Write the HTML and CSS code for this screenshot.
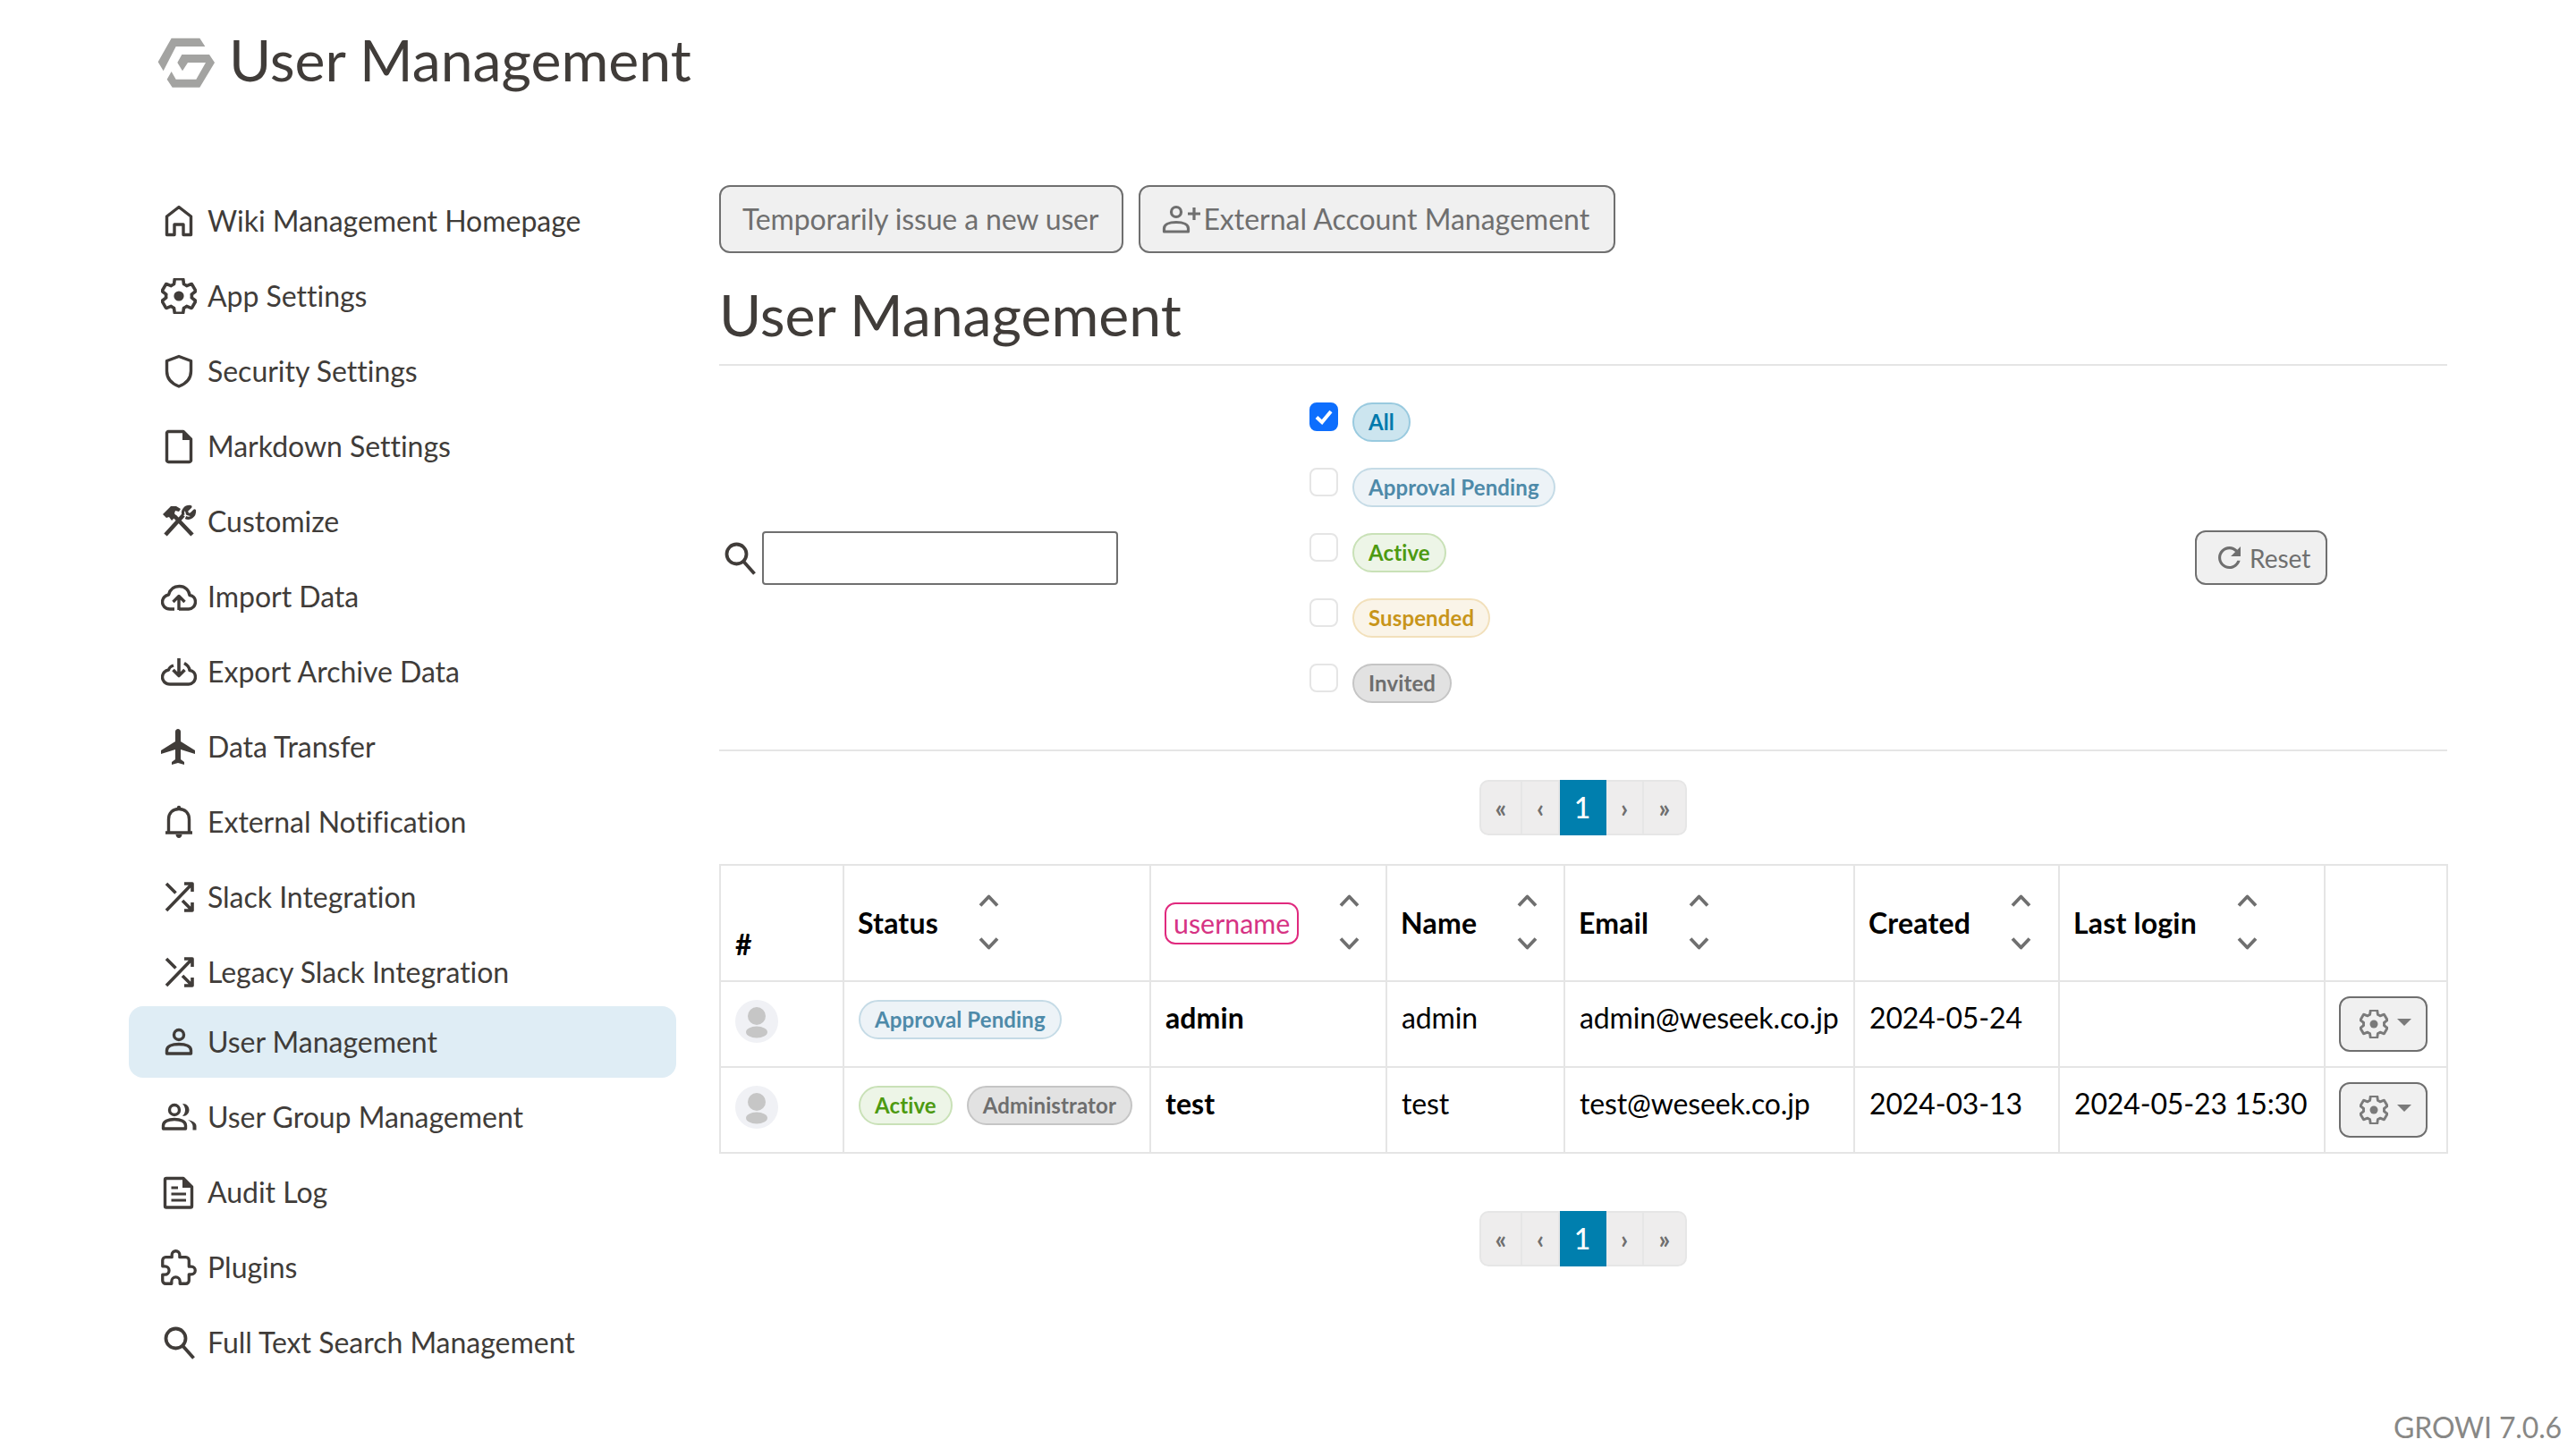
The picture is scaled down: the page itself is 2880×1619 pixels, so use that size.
FILE: index.html
```html
<!DOCTYPE html>
<html lang="en">
<head>
<meta charset="utf-8">
<title>User Management</title>
<link rel="stylesheet" href="styles.css">
</head>
<body>
<svg class="defs" width="0" height="0" aria-hidden="true">
  <symbol id="i-gear" viewBox="2 2 20 20"><path class="ln" d="M19.14 12.94c.04-.3.06-.61.06-.94 0-.32-.02-.64-.07-.94l2.03-1.58c.18-.14.23-.41.12-.61l-1.92-3.32c-.12-.22-.37-.29-.59-.22l-2.39.96c-.5-.38-1.03-.7-1.62-.94l-.36-2.54c-.04-.24-.24-.41-.48-.41h-3.84c-.24 0-.43.17-.47.41l-.36 2.54c-.59.24-1.13.57-1.62.94l-2.39-.96c-.22-.08-.47 0-.59.22L2.74 8.87c-.12.21-.08.47.12.61l2.03 1.58c-.05.3-.09.63-.09.94s.02.64.07.94l-2.03 1.58c-.18.14-.23.41-.12.61l1.92 3.32c.12.22.37.29.59.22l2.39-.96c.5.38 1.03.7 1.62.94l.36 2.54c.05.24.24.41.48.41h3.84c.24 0 .44-.17.47-.41l.36-2.54c.59-.24 1.13-.56 1.62-.94l2.39.96c.22.08.47 0 .59-.22l1.92-3.32c.12-.22.07-.47-.12-.61l-2.01-1.58z" stroke-width="1.8"/><circle class="fl" cx="12" cy="12" r="2.8"/></symbol>
  <symbol id="i-shuffle" viewBox="0 0 40 40"><path class="ln" d="M6 5L16.5 15.5M26 5H35V14M35 5L6 35M35 26V35H26M35 35L24 24" stroke-width="3.6"/></symbol>
  <symbol id="i-up" viewBox="0 0 23 14"><path class="ln" d="M2 12.5L11.5 2.5 21 12.5" stroke-width="3.8"/></symbol>
  <symbol id="i-down" viewBox="0 0 23 14"><path class="ln" d="M2 1.5L11.5 11.5 21 1.500" stroke-width="3.8"/></symbol>
  <symbol id="i-search" viewBox="0 0 40 40"><circle class="ln" cx="16.5" cy="15.5" r="11" stroke-width="3.8"/><path class="ln" d="M24.5 24L36.5 37.5" stroke-width="3.8"/></symbol>
  <symbol id="i-avatar" viewBox="0 0 48 48"><circle class="av-bg" cx="24" cy="24" r="24"/><circle class="av-fg" cx="24" cy="18" r="10"/><ellipse class="av-fg" cx="24" cy="36" rx="12" ry="6.5"/></symbol>
</svg>

<div class="page">
  <header class="page-head">
    <svg class="logo" viewBox="48 68 192 168"><path d="M95 70H190L208 98H110L68 180 50 150Z"/><path d="M130 125H222L240 152 190 235H98L80 208 95 182 110 208H178L210 152H150L132 180 115 152Z"/></svg>
    <h1 class="page-title">User Management</h1>
  </header>

  <div class="layout">
    <nav class="sidebar">
      <a class="nav-item"><svg class="ico" viewBox="0 0 40 40"><path class="ln" d="M6.5 35.5V15L20 4.5 33.5 15V35.5H25V24H15V35.5Z" stroke-width="3.4"/></svg><span>Wiki Management Homepage</span></a>
      <a class="nav-item"><svg class="ico"><use href="#i-gear"/></svg><span>App Settings</span></a>
      <a class="nav-item"><svg class="ico" viewBox="0 0 40 40"><path class="ln" d="M20 3.5L33.5 8.5V20C33.5 28 28 34 20 37 12 34 6.5 28 6.5 20V8.5Z" stroke-width="3.4"/></svg><span>Security Settings</span></a>
      <a class="nav-item"><svg class="ico" viewBox="0 0 40 40"><path class="ln" d="M8 3.5H25L33.5 12V35A2 2 0 0 1 31.5 37.5H8.5A2 2 0 0 1 6.5 35V5A2 2 0 0 1 8 3.5Z" stroke-width="3.4"/><path class="fl" d="M24 3.5L33.5 13H24Z"/></svg><span>Markdown Settings</span></a>
      <a class="nav-item"><svg class="ico" viewBox="0 0 40 40"><path class="ln" d="M5 35L25 13M35 35L15 14" stroke-width="4.6"/><path class="fl" d="M2 12L11 3H17L22 6 20 9 16 8 15 11 17 14 12 19 9 15 6 16Z"/><path class="ln" d="M25 13C23 8 27 3 33 3.5L28.5 8 29.5 11.5 33 12.5 37.5 8C38 14 32 18 27.5 15.5" stroke-width="3.2"/></svg><span>Customize</span></a>
      <a class="nav-item"><svg class="ico" viewBox="0 0 40 40"><path class="ln" d="M15 34H10C4.500 34 1.500 30 1.500 26 1.500 21.500 5 18.500 8.500 18 10 12 14.500 8.500 20.500 8.500 27 8.500 31.500 13 32 18.500 36 19 38.500 22 38.500 26 38.500 30.500 35 34 31 34H20" stroke-width="3.4"/><path class="ln" d="M20 35V20M13.500 26L20 19.500 26.500 26" stroke-width="3.4"/></svg><span>Import Data</span></a>
      <a class="nav-item"><svg class="ico" viewBox="0 0 40 40"><path class="ln" d="M14 13C11 14 9 16 8.500 18 5 18.500 1.500 21.500 1.500 26 1.500 30 4.500 34 10 34H31C35 34 38.500 30.500 38.500 26 38.500 22 36 19 32 18.500 31.700 15.500 29.500 12.500 26 10.500" stroke-width="3.4"/><path class="ln" d="M20 5V24M13.500 18L20 24.500 26.500 18" stroke-width="3.6"/></svg><span>Export Archive Data</span></a>
      <a class="nav-item"><svg class="ico" viewBox="2 2 20 20"><path class="fl" d="M21 16v-2l-8-5V3.500c0-.83-.67-1.500-1.500-1.500S10 2.670 10 3.500V9l-8 5v2l8-2.500V19l-2 1.500V22l3.500-1 3.500 1v-1.500L13 19v-5.500l8 2.500z"/></svg><span>Data Transfer</span></a>
      <a class="nav-item"><svg class="ico" viewBox="0 0 40 40"><path class="ln" d="M5 32H35M8.500 32V17C8.500 10 13 5.500 20 5.500 27 5.500 31.500 10 31.500 17V32" stroke-width="3.4"/><circle class="fl" cx="20" cy="4" r="2.200"/><path class="fl" d="M16.500 34H23.500C23.500 36 22 38 20 38 18 38 16.500 36 16.500 34Z"/></svg><span>External Notification</span></a>
      <a class="nav-item"><svg class="ico"><use href="#i-shuffle"/></svg><span>Slack Integration</span></a>
      <a class="nav-item"><svg class="ico"><use href="#i-shuffle"/></svg><span>Legacy Slack Integration</span></a>
      <a class="nav-item nav-item-active"><svg class="ico" viewBox="0 0 40 40"><circle class="ln" cx="20" cy="12" r="5.500" stroke-width="3.4"/><path class="ln" d="M6.500 33V29.500C6.500 25 12 22.500 20 22.500 28 22.500 33.500 25 33.500 29.500V33Z" stroke-width="3.4"/></svg><span>User Management</span></a>
      <a class="nav-item"><svg class="ico" viewBox="0 0 40 40"><circle class="ln" cx="15" cy="12" r="5.500" stroke-width="3.4"/><path class="ln" d="M2.500 33V29.500C2.500 25 8 22.500 15 22.500 22 22.500 27.500 25 27.500 29.500V33Z" stroke-width="3.4"/><path class="fl" d="M24 5C29 5 31.500 8.500 31.500 12 31.500 15.500 29 19 24 19 26.500 16 27 14 27 12 27 10 26.500 8 24 5Z"/><path class="fl" d="M30 23C35 24 39.500 26.500 39.500 30V34.500H35.500V30C35.500 27.500 33 25 30 23Z"/></svg><span>User Group Management</span></a>
      <a class="nav-item"><svg class="ico" viewBox="0 0 40 40"><path class="ln" d="M6 4.500H25L34.500 14V35.500A1.500 1.500 0 0 1 33 37H6A1.500 1.500 0 0 1 4.500 35.500V6A1.500 1.500 0 0 1 6 4.500Z" stroke-width="3.4"/><path class="ln" d="M11.500 15H19M11.500 22H28M11.500 29H28" stroke-width="3"/><path class="fl" d="M24 4.500L34.500 15H24Z"/></svg><span>Audit Log</span></a>
      <a class="nav-item"><svg class="ico" viewBox="1 0 23 23"><path class="ln" d="M20.500 11H19V7c0-1.100-.9-2-2-2h-4V3.500C13 2.120 11.880 1 10.500 1S8 2.120 8 3.500V5H4c-1.100 0-1.990.9-1.990 2v3.800H3.500c1.490 0 2.700 1.210 2.700 2.700s-1.210 2.700-2.700 2.700H2V20c0 1.100.9 2 2 2h3.800v-1.500c0-1.490 1.210-2.700 2.700-2.700 1.490 0 2.700 1.210 2.700 2.700V22H17c1.100 0 2-.9 2-2v-4h1.500c1.380 0 2.500-1.120 2.500-2.500S21.880 11 20.500 11z" stroke-width="1.900"/></svg><span>Plugins</span></a>
      <a class="nav-item"><svg class="ico"><use href="#i-search"/></svg><span>Full Text Search Management</span></a>
    </nav>

    <main class="main">
      <div class="actions">
        <button class="btn btn-issue">Temporarily issue a new user</button>
        <button class="btn btn-icon"><svg class="btn-person" viewBox="0 0 44 32"><circle class="ln" cx="16" cy="8" r="5.500" stroke-width="3.2"/><path class="ln" d="M2.500 30V26.500C2.500 22 8 19.500 16 19.500 24 19.500 29.500 22 29.500 26.500V30Z" stroke-width="3.200"/><path class="ln" d="M36 3V17M29 10H43" stroke-width="3.2"/></svg>External Account Management</button>
      </div>
      <h2 class="section-title">User Management</h2>

      <section class="filters">
        <div class="search">
          <svg class="search-ico"><use href="#i-search"/></svg>
          <input class="search-input" type="text">
        </div>
        <div class="status-list">
          <label class="status-row"><span class="check check-on"><svg viewBox="0 0 32 32"><path d="M8 16.500L14 22 24 10" /></svg></span><span class="pill pill-all">All</span></label>
          <label class="status-row"><span class="check"></span><span class="pill pill-pending">Approval Pending</span></label>
          <label class="status-row"><span class="check"></span><span class="pill pill-active">Active</span></label>
          <label class="status-row"><span class="check"></span><span class="pill pill-suspended">Suspended</span></label>
          <label class="status-row"><span class="check"></span><span class="pill pill-gray">Invited</span></label>
        </div>
        <button class="btn btn-reset"><svg class="reset-ico" viewBox="4 4 16 16"><path class="fl" d="M17.650 6.350C16.200 4.900 14.210 4 12 4c-4.420 0-7.990 3.580-7.990 8s3.570 8 7.990 8c3.730 0 6.840-2.550 7.730-6h-2.080c-.82 2.330-3.040 4-5.650 4-3.310 0-6-2.690-6-6s2.690-6 6-6c1.660 0 3.140.69 4.220 1.780L13 11h7V4l-2.350 2.350z"/></svg>Reset</button>
      </section>

      <div class="pager">
        <span class="pg pg-first">«</span><span class="pg">‹</span><span class="pg pg-cur">1</span><span class="pg">›</span><span class="pg pg-last">»</span>
      </div>

      <table class="users">
        <colgroup>
          <col class="c-num"><col class="c-status"><col class="c-user"><col class="c-name"><col class="c-email"><col class="c-created"><col class="c-login"><col class="c-act">
        </colgroup>
        <thead>
          <tr>
            <th class="th-num">#</th>
            <th><div class="th-in">Status<span class="sort"><svg><use href="#i-up"/></svg><svg><use href="#i-down"/></svg></span></div></th>
            <th><div class="th-in"><code class="code">username</code><span class="sort"><svg><use href="#i-up"/></svg><svg><use href="#i-down"/></svg></span></div></th>
            <th><div class="th-in">Name<span class="sort"><svg><use href="#i-up"/></svg><svg><use href="#i-down"/></svg></span></div></th>
            <th><div class="th-in">Email<span class="sort"><svg><use href="#i-up"/></svg><svg><use href="#i-down"/></svg></span></div></th>
            <th><div class="th-in">Created<span class="sort"><svg><use href="#i-up"/></svg><svg><use href="#i-down"/></svg></span></div></th>
            <th><div class="th-in">Last login<span class="sort"><svg><use href="#i-up"/></svg><svg><use href="#i-down"/></svg></span></div></th>
            <th></th>
          </tr>
        </thead>
        <tbody>
          <tr>
            <td><svg class="avatar"><use href="#i-avatar"/></svg></td>
            <td><div class="pills"><span class="pill pill-pending">Approval Pending</span></div></td>
            <td class="strong">admin</td>
            <td>admin</td>
            <td>admin@weseek.co.jp</td>
            <td>2024-05-24</td>
            <td></td>
            <td><button class="btn btn-gear"><svg class="gear"><use href="#i-gear"/></svg><span class="caret"></span></button></td>
          </tr>
          <tr>
            <td><svg class="avatar"><use href="#i-avatar"/></svg></td>
            <td><div class="pills"><span class="pill pill-active">Active</span><span class="pill pill-gray">Administrator</span></div></td>
            <td class="strong">test</td>
            <td>test</td>
            <td>test@weseek.co.jp</td>
            <td>2024-03-13</td>
            <td>2024-05-23 15:30</td>
            <td><button class="btn btn-gear"><svg class="gear"><use href="#i-gear"/></svg><span class="caret"></span></button></td>
          </tr>
        </tbody>
      </table>

      <div class="pager pager-bottom">
        <span class="pg pg-first">«</span><span class="pg">‹</span><span class="pg pg-cur">1</span><span class="pg">›</span><span class="pg pg-last">»</span>
      </div>
    </main>
  </div>

  <div class="version">GROWI 7.0.6</div>
</div>
</body>
</html>
```

FILE: styles.css
```css
* { box-sizing: border-box; }
html, body { margin: 0; padding: 0; background: #fff; }
body { font-family: Lato, "Open Sans", sans-serif; font-size: 32px; line-height: 48px; color: #403c39; }
.defs { position: absolute; }
.ln { fill: none; stroke: currentColor; stroke-linejoin: round; }
.fl { fill: currentColor; }
.av-bg { fill: #f0f1f5; }
.av-fg { fill: #c6c6c6; }

.page { position: relative; width: 2880px; height: 1619px; overflow: hidden; padding-left: 144px; }

.page-head { display: flex; align-items: center; height: 134px; padding-left: 32px; gap: 16px; }
.logo { width: 64px; height: 56px; margin-top: 6px; fill: #a3a3a1; flex: none; }
.page-title { margin: 0; font-size: 64.3px; font-weight: 400; line-height: 76px; }

.layout { display: flex; gap: 48px; margin-top: 71px; }

.sidebar { width: 612px; flex: none; display: flex; flex-direction: column; }
.nav-item { display: flex; align-items: center; gap: 12px; height: 84px; padding-left: 36px; letter-spacing: -0.02px; }
.nav-item-active { height: 80px; margin: -4px 0 2px; background: #dfedf5; border-radius: 16px; }
.ico { width: 40px; height: 40px; flex: none; }

.main { width: 1932px; flex: none; margin-top: 2px; }
.actions { display: flex; gap: 17px; }
.btn { font: inherit; color: #6f6f6f; background: #f0f0f0; border: 2px solid #6f6f6f; border-radius: 12px; }
.actions .btn { height: 76px; padding: 0 27px 0 24px; display: flex; align-items: center; }
.actions .btn-issue { padding-right: 26px; letter-spacing: -0.14px; }
.btn-person { width: 44px; height: 32px; margin-right: 2px; flex: none; }

.section-title { margin: 31px 0 0; font-size: 64.3px; font-weight: 400; line-height: 76px; padding-bottom: 17px; border-bottom: 2px solid #e5e5e5; }

.filters { display: grid; grid-template-columns: 660px 990px auto; align-items: center; padding: 41px 0 52px; border-bottom: 2px solid #e5e5e5; }
.search { display: flex; align-items: center; gap: 5px; padding-left: 3px; margin-top: 11px; }
.search-ico { width: 40px; height: 40px; flex: none; }
.search-input { width: 398px; height: 60px; border: 2px solid #6f6f6f; border-radius: 4px; background: #fff; }
.status-list { display: flex; flex-direction: column; gap: 29px; }
.status-row { display: flex; align-items: flex-start; gap: 16px; height: 44px; }
.check { width: 32px; height: 32px; flex: none; border: 2px solid #e5e5e5; border-radius: 8px; background: #fff; }
.check-on { background: #0d6efd; border-color: #0d6efd; }
.check-on svg { display: block; width: 32px; height: 32px; margin: -2px; }
.check-on path { fill: none; stroke: #fff; stroke-width: 4; }
.btn-reset { display: flex; align-items: center; width: 148px; height: 61px; margin-top: 11px; padding: 0 0 0 24px; font-size: 28px; line-height: 40px; gap: 10px; }
.reset-ico { width: 25px; height: 25px; flex: none; }

.pill { display: inline-flex; align-items: center; height: 44px; padding: 0 16px; border: 2px solid; border-radius: 22px; font-size: 24px; font-weight: 700; line-height: 36px; letter-spacing: 0.12px; white-space: nowrap; }
.pill-all { color: #0079ac; background: #cce5ef; border-color: #99cadf; }
.pill-pending { color: #4e8aa9; background: #edf3f7; border-color: #c5dbe6; }
.pill-active { color: #4d9a11; background: #edf5e7; border-color: #c9e1b7; }
.pill-suspended { color: #c8951a; background: #faf4e8; border-color: #f2e0bb; }
.pill-gray { color: #6e6e6e; background: #e2e2e2; border-color: #c5c5c5; }

.pager { display: flex; justify-content: center; margin-top: 32px; }
.pager-bottom { margin-top: 64px; }
.pg { display: flex; align-items: center; justify-content: center; width: 42px; height: 62px; background: #eeeded; border: 2px solid #e6e6e6; border-left-width: 0; color: #6f6f6f; font-size: 28px; font-weight: 700; }
.pg-first { width: 48px; border-left-width: 2px; border-radius: 10px 0 0 10px; }
.pg-last { width: 48px; border-radius: 0 10px 10px 0; }
.pg-cur { width: 52px; background: #007fae; border-color: #007fae; color: #fff; font-size: 32px; font-weight: 500; }

.users { width: 1931px; margin-top: 32px; border-collapse: collapse; table-layout: fixed; color: #000; letter-spacing: -0.14px; }
.c-num { width: 138px; } .c-status { width: 343px; } .c-user { width: 264px; } .c-name { width: 199px; }
.c-email { width: 324px; } .c-created { width: 229px; } .c-login { width: 297px; } .c-act { width: 137px; }
.users th, .users td { border: 2px solid #e5e5e5; padding: 16px; vertical-align: top; text-align: left; white-space: nowrap; }
.users thead tr { height: 130px; }
.users tbody tr { height: 96px; }
.users th { font-weight: 700; letter-spacing: 0.2px; vertical-align: middle; padding-top: 0; padding-bottom: 0; }
.users .th-num { vertical-align: bottom; padding-bottom: 16px; }
.th-in { display: flex; align-items: center; margin-left: -1px; }
.sort { display: flex; flex-direction: column; gap: 34px; margin: -2px 0 0 45px; color: #6f6f6f; }
.sort svg { display: block; width: 23px; height: 14px; }
.code { font: inherit; font-size: 30.4px; font-weight: 400; letter-spacing: 0; color: #d63384; border: 2px solid #e0297e; border-radius: 12px; padding: 0 8px; line-height: 43px; }
.strong { font-weight: 700; letter-spacing: 0.1px; }
.avatar { display: block; width: 48px; height: 48px; margin: 4px 0 0; }
.pills { display: flex; gap: 16px; margin-top: 4px; }

.btn-gear { display: flex; align-items: center; gap: 10px; width: 99px; height: 62px; padding: 0 0 0 21px; margin-left: -1px; color: #7a7a7a; }
.gear { width: 32px; height: 32px; flex: none; }
.caret { width: 0; height: 0; border: 8px solid transparent; border-top-color: #7a7a7a; border-bottom-width: 0; margin-top: -4px; }

.version { position: absolute; right: 16px; bottom: -1px; color: #888886; font-size: 32px; line-height: 48px; letter-spacing: -0.14px; }
```
